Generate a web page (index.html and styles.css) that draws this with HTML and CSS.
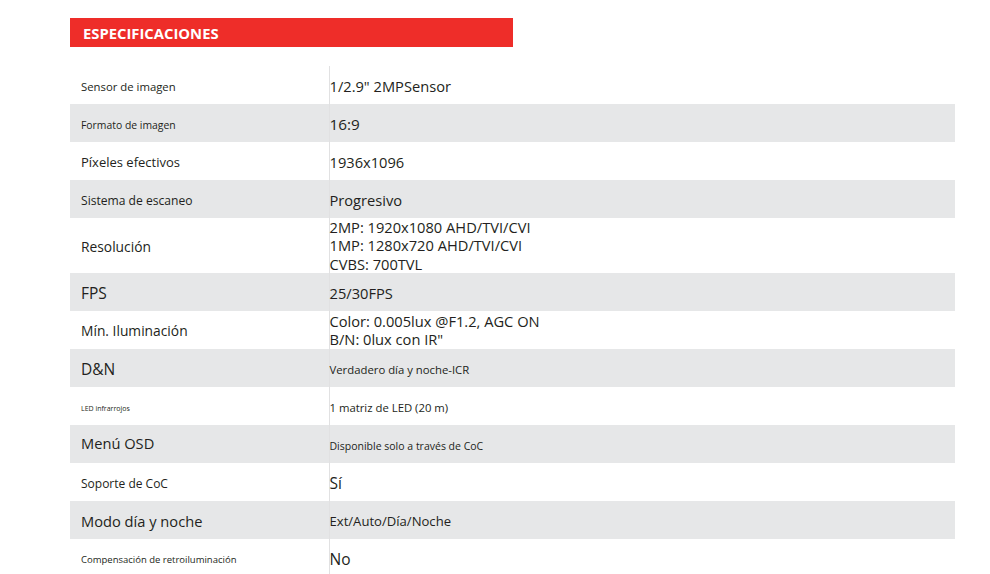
FILE: index.html
```html
<!DOCTYPE html>
<html lang="es">
<head>
<meta charset="utf-8">
<title>Especificaciones</title>
<link rel="stylesheet" href="styles.css">
</head>
<body>
<main class="page">
  <h2 class="section-title">ESPECIFICACIONES</h2>
  <table class="spec-table">
    <tbody>
      <tr>
        <th class="label"><span class="s113">Sensor de imagen</span></th>
        <td class="value"><span class="s147">1/2.9" 2MPSensor</span></td>
      </tr>
      <tr class="alt">
        <th class="label"><span class="s104">Formato de imagen</span></th>
        <td class="value"><span class="s153">16:9</span></td>
      </tr>
      <tr>
        <th class="label"><span class="s130">Píxeles efectivos</span></th>
        <td class="value"><span class="s147">1936x1096</span></td>
      </tr>
      <tr class="alt">
        <th class="label"><span class="s121">Sistema de escaneo</span></th>
        <td class="value"><span class="s147">Progresivo</span></td>
      </tr>
      <tr class="tall">
        <th class="label"><span class="s138">Resolución</span></th>
        <td class="value tight"><span class="s147">2MP: 1920x1080 AHD/TVI/CVI<br>1MP: 1280x720 AHD/TVI/CVI<br>CVBS: 700TVL</span></td>
      </tr>
      <tr class="alt">
        <th class="label"><span class="s155">FPS</span></th>
        <td class="value"><span class="s147">25/30FPS</span></td>
      </tr>
      <tr>
        <th class="label"><span class="s138">Mín. Iluminación</span></th>
        <td class="value tight"><span class="s147">Color: 0.005lux @F1.2, AGC ON<br>B/N: 0lux con IR"</span></td>
      </tr>
      <tr class="alt">
        <th class="label"><span class="s155">D&amp;N</span></th>
        <td class="value"><span class="s113">Verdadero día y noche-ICR</span></td>
      </tr>
      <tr>
        <th class="label"><span class="s70">LED infrarrojos</span></th>
        <td class="value"><span class="s113">1 matriz de LED (20 m)</span></td>
      </tr>
      <tr class="alt">
        <th class="label raised"><span class="s147">Menú OSD</span></th>
        <td class="value"><span class="s105">Disponible solo a través de CoC</span></td>
      </tr>
      <tr>
        <th class="label"><span class="s120">Soporte de CoC</span></th>
        <td class="value"><span class="s155">Sí</span></td>
      </tr>
      <tr class="alt">
        <th class="label"><span class="s147">Modo día y noche</span></th>
        <td class="value"><span class="s131">Ext/Auto/Día/Noche</span></td>
      </tr>
      <tr>
        <th class="label"><span class="s95">Compensación de retroiluminación</span></th>
        <td class="value"><span class="s155">No</span></td>
      </tr>
    </tbody>
  </table>
</main>
</body>
</html>
```

FILE: styles.css
```css
html, body {
  margin: 0;
  padding: 0;
  background: #ffffff;
}

body {
  font-family: "Open Sans", "Noto Sans", "Liberation Sans", sans-serif;
  color: #231f20;
}

.page {
  padding: 18px 0 0 70px;
}

.section-title {
  margin: 0;
  width: 443px;
  height: 29px;
  box-sizing: border-box;
  padding: 1px 0 0 13px;
  background: #ee2d29;
  color: #ffffff;
  font-size: 14.8px;
  font-weight: 700;
  line-height: 29px;
}

.spec-table {
  margin-top: 19px;
  width: 885px;
  border-collapse: collapse;
  table-layout: fixed;
}

.spec-table tr {
  height: 38px;
}

.spec-table tr.tall {
  height: 55px;
}

.spec-table tr.alt {
  background: #e6e7e8;
}

.label,
.value {
  font-size: 14.67px;
  line-height: 18.33px;
  vertical-align: middle;
  white-space: nowrap;
  padding-top: 2px;
  padding-bottom: 0;
}

.label {
  width: 259px;
  padding-left: 11px;
  padding-right: 0;
  box-sizing: border-box;
  text-align: left;
  font-weight: 400;
}

.label.raised {
  padding-top: 0;
  padding-bottom: 1px;
}

.value {
  padding-left: 0;
  padding-right: 0;
  border-left: 1px solid #e1e1e2;
}

.value.tight {
  padding-top: 0;
}

.s70 { font-size: 7px; }
.s95 { font-size: 9.5px; }
.s104 { font-size: 10.4px; }
.s105 { font-size: 10.5px; }
.s113 { font-size: 11.33px; }
.s120 { font-size: 12px; }
.s121 { font-size: 12.1px; }
.s130 { font-size: 13px; }
.s131 { font-size: 13.1px; }
.s138 { font-size: 13.8px; }
.s147 { font-size: 14.67px; }
.s153 { font-size: 15.3px; }
.s155 { font-size: 15.5px; }
```
